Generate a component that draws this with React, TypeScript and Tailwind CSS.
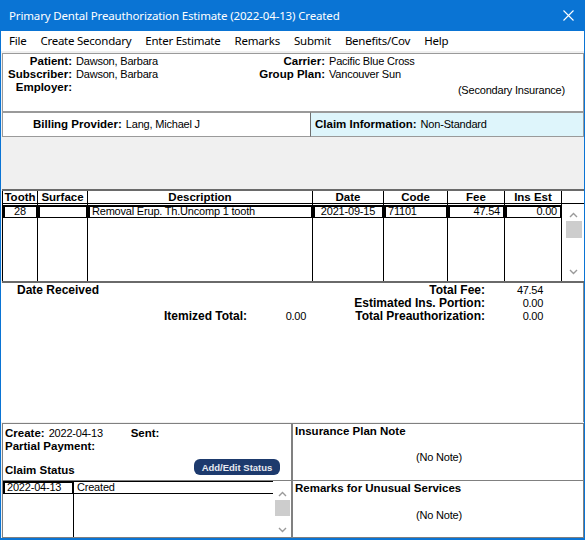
import React from "react";

const Chevron = ({ dir }: { dir: "up" | "down" }) => (
  <svg width="9" height="6" viewBox="0 0 9 6">
    <polyline
      points={dir === "up" ? "1,5 4.5,1.5 8,5" : "1,1 4.5,4.5 8,1"}
      fill="none"
      stroke="#9a9a9a"
      strokeWidth="1.4"
    />
  </svg>
);

const Cell = ({ children, align = "left" }: { children?: React.ReactNode; align?: "left" | "right" | "center" }) => (
  <div
    className={`h-[13px] border border-black shadow-[inset_1px_1px_0_#000] px-[3px] leading-[11px] whitespace-nowrap overflow-hidden ${
      align === "right" ? "text-right" : align === "center" ? "text-center" : "text-left"
    }`}
  >
    {children}
  </div>
);

export default function App() {
  const cols = [
    { name: "Tooth", w: "w-[35px]", v: "28", a: "center" as const },
    { name: "Surface", w: "w-[50px]", v: "", a: "left" as const },
    { name: "Description", w: "w-[225px]", v: "Removal Erup. Th.Uncomp 1 tooth", a: "left" as const },
    { name: "Date", w: "w-[71px]", v: "2021-09-15", a: "center" as const },
    { name: "Code", w: "w-[64px]", v: "71101", a: "left" as const },
    { name: "Fee", w: "w-[57px]", v: "47.54", a: "right" as const },
    { name: "Ins Est", w: "w-[57px]", v: "0.00", a: "right" as const },
  ];

  return (
    <div className="w-[585px] h-[540px] bg-[#0a74d4] flex flex-col overflow-hidden font-['Liberation_Sans',Arial,sans-serif] text-[11px] text-black">
      {/* Title bar */}
      <div className="h-[31px] shrink-0 flex items-center pl-[9px] pr-[11px] text-white font-['Noto_Sans',sans-serif] text-[11.5px]">
        <span className="flex-1 tracking-[-0.15px]">Primary Dental Preauthorization Estimate (2022-04-13) Created</span>
        <svg width="11" height="11" viewBox="0 0 11 11">
          <path d="M0.5 0.5 L10.5 10.5 M10.5 0.5 L0.5 10.5" stroke="white" strokeWidth="1.1" />
        </svg>
      </div>

      <div className="flex-1 mx-[1px] mb-[2px] bg-[#f0f0f0] flex flex-col">
        {/* Menu */}
        <div className="h-[20px] shrink-0 bg-white flex items-center pl-[1px] font-['Noto_Sans',sans-serif] text-[11.5px] tracking-[-0.25px]">
          {["File", "Create Secondary", "Enter Estimate", "Remarks", "Submit", "Benefits/Cov", "Help"].map((m) => (
            <span key={m} className="px-[7px]">
              {m}
            </span>
          ))}
        </div>
        <div className="h-[2px] shrink-0" />

        {/* Header panel */}
        <div className="ml-[1px] h-[59px] shrink-0 border border-[#9a9a9a] bg-white pt-[1px] grid grid-cols-[69px_181px_72px_1fr] auto-rows-[13px] leading-[13px]">
          <div className="text-right font-bold text-[11.5px]">Patient:</div>
          <div className="pl-[4px] tracking-[-0.2px]">Dawson, Barbara</div>
          <div className="text-right font-bold text-[11.5px] whitespace-nowrap">Carrier:</div>
          <div className="pl-[4px] tracking-[-0.2px]">Pacific Blue Cross</div>

          <div className="text-right font-bold text-[11.5px]">Subscriber:</div>
          <div className="pl-[4px] tracking-[-0.2px]">Dawson, Barbara</div>
          <div className="text-right font-bold text-[11.5px] whitespace-nowrap">Group Plan:</div>
          <div className="pl-[4px] tracking-[-0.2px]">Vancouver Sun</div>

          <div className="text-right font-bold text-[11.5px]">Employer:</div>
          <div />
          <div />
          <div className="text-right pr-[18px] pt-[3px] tracking-[-0.2px]">(Secondary Insurance)</div>
        </div>

        {/* Billing row */}
        <div className="ml-[1px] h-[25px] shrink-0 flex">
          <div className="w-[308px] bg-white border border-[#9a9a9a] border-r-0 flex items-center pl-[30px]">
            <span className="font-bold text-[11.5px]">Billing Provider:</span>
            <span className="pl-[4px] tracking-[-0.2px]">Lang, Michael J</span>
          </div>
          <div className="flex-1 bg-[#def5fb] border border-[#9a9a9a] border-l-[#6f6f6f] flex items-center pl-[4px]">
            <span className="font-bold text-[11.5px]">Claim Information:</span>
            <span className="pl-[4px] tracking-[-0.2px]">Non-Standard</span>
          </div>
        </div>

        {/* Gray gap */}
        <div className="h-[52px] shrink-0" />

        {/* Table */}
        <div className="ml-[1px] h-[94px] shrink-0 bg-white border-t-2 border-b-2 border-[#6a6a6a] flex">
          <div className="w-[1px] bg-black" />
          {cols.map((c) => (
            <div key={c.name} className={`${c.w} shrink-0 border-r border-black flex flex-col`}>
              <div className="h-[13px] border-b border-black text-center font-bold text-[11.5px] leading-[13px] whitespace-nowrap overflow-hidden">
                {c.name}
              </div>
              <div className="pt-[1px]">
                <Cell align={c.a}>
                  <span className="tracking-[-0.2px]">{c.v}</span>
                </Cell>
              </div>
            </div>
          ))}
          <div className="flex-1 flex flex-col">
            <div className="h-[13px] border-b border-black" />
            <div className="flex-1 flex flex-col items-center">
              <div className="h-[15px] flex items-end pb-[1px]">
                <Chevron dir="up" />
              </div>
              <div className="mt-[2px] ml-[2px] w-[16px] h-[17px] bg-[#cdcdcd]" />
              <div className="flex-1" />
              <div className="h-[12px] flex items-start">
                <Chevron dir="down" />
              </div>
            </div>
          </div>
        </div>

        {/* Totals */}
        <div className="ml-[0px] h-[139px] shrink-0 bg-white border-r border-[#8a8a8a] pt-[1px] grid grid-cols-[163px_87px_55px_179px_31px_27px] auto-rows-[13px] leading-[13px] content-start">
          <div className="pl-[16px] font-bold text-[12px]">Date Received</div>
          <div />
          <div />
          <div className="text-right font-bold text-[12px]">Total Fee:</div>
          <div />
          <div className="text-right tracking-[-0.3px]">47.54</div>

          <div />
          <div />
          <div />
          <div className="text-right font-bold text-[12px] whitespace-nowrap">Estimated Ins. Portion:</div>
          <div />
          <div className="text-right tracking-[-0.3px]">0.00</div>

          <div />
          <div className="font-bold text-[12px] whitespace-nowrap">Itemized Total:</div>
          <div className="text-right tracking-[-0.3px]">0.00</div>
          <div className="text-right font-bold text-[12px] whitespace-nowrap">Total Preauthorization:</div>
          <div />
          <div className="text-right tracking-[-0.3px]">0.00</div>
        </div>

        <div className="h-[1px] shrink-0" />

        {/* Bottom */}
        <div className="ml-[1px] flex-1 flex">
          <div className="w-[290px] flex flex-col">
            <div className="h-[58px] bg-white border border-[#808080] px-[2px] leading-[13px] relative">
              <div className="flex pt-[3px]">
                <span className="font-bold text-[11.5px]">Create:</span>
                <span className="pl-[4px] tracking-[-0.2px] w-[86px]">2022-04-13</span>
                <span className="font-bold text-[11.5px]">Sent:</span>
              </div>
              <div className="font-bold text-[11.5px]">Partial Payment:</div>
              <div className="flex items-end mt-[5px]">
                <span className="font-bold text-[11.5px] mt-[6px]">Claim Status</span>
                <div className="ml-auto mr-[9px] w-[86px] h-[16px] rounded-[6px] bg-[#1d3a6d] text-[#e8eaf0] font-bold text-[9.5px] flex items-center justify-center mb-[2px]">
                  Add/Edit Status
                </div>
              </div>
            </div>
            <div className="flex-1 bg-white border-l border-r border-b border-[#808080] flex">
              <div className="w-[71px] border-r border-black">
                <Cell>
                  <span className="tracking-[-0.2px]">2022-04-13</span>
                </Cell>
              </div>
              <div className="w-[199px]">
                <div className="h-[13px] border-t border-b border-black pl-[3px] leading-[11px] tracking-[-0.2px]">
                  Created
                </div>
              </div>
              <div className="flex-1 flex flex-col items-center bg-white">
                <div className="h-[16px] flex items-end">
                  <Chevron dir="up" />
                </div>
                <div className="mt-[3px] w-[15px] h-[16px] bg-[#cdcdcd]" />
                <div className="flex-1" />
                <div className="h-[10px] flex items-start">
                  <Chevron dir="down" />
                </div>
              </div>
            </div>
          </div>
          <div className="flex-1 flex flex-col">
            <div className="h-[58px] bg-white border border-[#808080] pl-[2px] leading-[13px]">
              <div className="font-bold text-[11.5px] pt-[1px]">Insurance Plan Note</div>
              <div className="text-center mt-[13px] tracking-[-0.2px]">(No Note)</div>
            </div>
            <div className="flex-1 bg-white border border-t-0 border-[#808080] pl-[2px] leading-[13px]">
              <div className="font-bold text-[11.5px] pt-[1px]">Remarks for Unusual Services</div>
              <div className="text-center mt-[14px] tracking-[-0.2px]">(No Note)</div>
            </div>
          </div>
        </div>
      </div>
    </div>
  );
}
